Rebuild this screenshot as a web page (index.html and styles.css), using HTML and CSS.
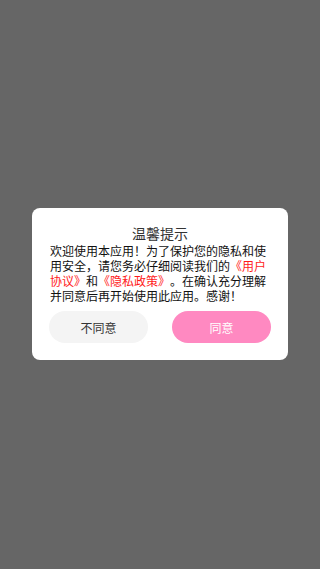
FILE: index.html
```html
<!DOCTYPE html>
<html lang="zh-CN">
<head>
	<meta charset="UTF-8">
	<title>温馨提示</title>
	<link rel="stylesheet" href="styles.css">
</head>
<body>
	<div class="mask">
		<div class="dialog">
			<h2 class="title">温馨提示</h2>
			<p class="content">欢迎使用本应用！为了保护您的隐私和使用安全，请您务必仔细阅读我们的<span class="link">《用户协议》</span>和<span class="link">《隐私政策》</span>。在确认充分理解并同意后再开始使用此应用。感谢！</p>
			<div class="btns">
				<button class="btn btn-no">不同意</button>
				<button class="btn btn-yes">同意</button>
			</div>
		</div>
	</div>
</body>
</html>
```

FILE: styles.css
```css
html, body {
	margin: 0;
	padding: 0;
	height: 100%;
}
body {
	background-color: #666666;
	font-family: "Noto Sans CJK SC", "Noto Sans", sans-serif;
}
.mask {
	height: 100%;
	display: flex;
	align-items: center;
	justify-content: center;
}
.dialog {
	width: 256px;
	box-sizing: border-box;
	background-color: #fff;
	border-radius: 8px;
	padding: 15px 17px 17px 17px;
	margin-top: -1px;
}
.title {
	margin: 0;
	font-size: 14px;
	font-weight: normal;
	line-height: 20px;
	text-align: center;
	color: #333;
}
.content {
	margin: 0;
	font-size: 12px;
	line-height: 15px;
	color: #111;
	padding-left: 1px;
	text-spacing-trim: space-all;
}
.link {
	color: #ff1a1a;
}
.btns {
	display: flex;
	justify-content: space-between;
	margin-top: 8px;
}
.btn {
	width: 99px;
	height: 32px;
	border: none;
	border-radius: 16px;
	font-family: inherit;
	font-size: 12px;
	padding: 0;
	outline: none;
}
.btn-no {
	background-color: #f4f4f4;
	color: #333;
}
.btn-yes {
	background-color: #ff89c1;
	color: #fff;
}
```
